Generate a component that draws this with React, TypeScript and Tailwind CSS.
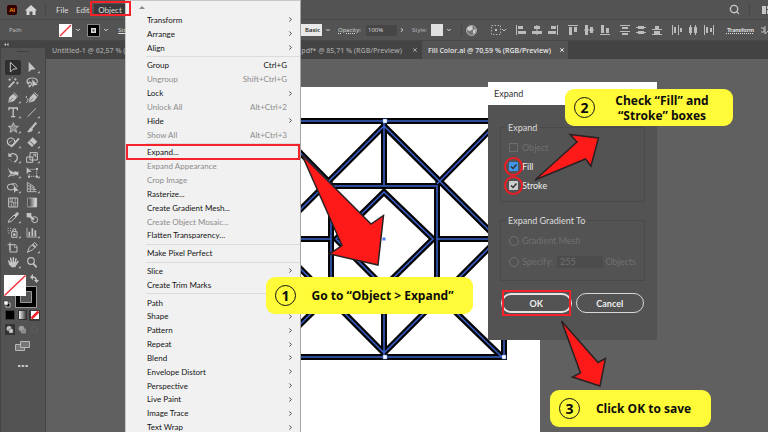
import React from "react";
import { ChevronDown, ChevronRight, Search, X } from "lucide-react";

type MenuItem = { label: string; shortcut?: string; sub?: boolean; off?: boolean; marked?: boolean };

const menuGroups: MenuItem[][] = [
  [
    { label: "Transform", sub: true },
    { label: "Arrange", sub: true },
    { label: "Align", sub: true },
  ],
  [
    { label: "Group", shortcut: "Ctrl+G" },
    { label: "Ungroup", shortcut: "Shift+Ctrl+G", off: true },
    { label: "Lock", sub: true },
    { label: "Unlock All", shortcut: "Alt+Ctrl+2", off: true },
    { label: "Hide", sub: true },
    { label: "Show All", shortcut: "Alt+Ctrl+3", off: true },
  ],
  [
    { label: "Expand...", marked: true },
    { label: "Expand Appearance", off: true },
    { label: "Crop Image", off: true },
    { label: "Rasterize..." },
    { label: "Create Gradient Mesh..." },
    { label: "Create Object Mosaic...", off: true },
    { label: "Flatten Transparency..." },
  ],
  [{ label: "Make Pixel Perfect" }],
  [{ label: "Slice", sub: true }, { label: "Create Trim Marks" }],
  [
    { label: "Path", sub: true },
    { label: "Shape", sub: true },
    { label: "Pattern", sub: true },
    { label: "Repeat", sub: true },
    { label: "Blend", sub: true },
    { label: "Envelope Distort", sub: true },
    { label: "Perspective", sub: true },
    { label: "Live Paint", sub: true },
    { label: "Image Trace", sub: true },
    { label: "Text Wrap", sub: true },
  ],
];

function ObjectMenu() {
  return (
    <nav
      aria-label="Object"
      className="absolute left-[125px] top-0 flex h-[434px] w-[176px] flex-col border-l border-r border-t border-[#c8c8c8] border-r-[#a5a5a5] bg-[#f1f1f1] font-['Lato','Open_Sans',sans-serif] text-[8px] leading-none text-[#141414]"
    >
      <div className="flex h-3 items-center pl-[13px]">
        <svg className="h-[3px] w-[6px]" viewBox="0 0 6 3">
          <path d="M0 3L3 0L6 3Z" fill="#8a8a8a" />
        </svg>
      </div>
      {menuGroups.map((group, g) => (
        <React.Fragment key={g}>
          {g > 0 && (
            <div className="flex h-1 items-center pl-5">
              <div className="h-px w-full bg-[#dcdcdc]" />
            </div>
          )}
          {group.map((item) => (
            <button
              key={item.label}
              disabled={item.off}
              className="relative flex min-h-0 flex-1 items-center justify-between pl-[21px] pr-[13px] text-left disabled:text-[#8c8c8c]"
            >
              <span>{item.label}</span>
              {item.shortcut && <span>{item.shortcut}</span>}
              {item.sub && <ChevronRight className="-mr-[7px] size-[7px] text-[#333333]" strokeWidth={3} />}
              {item.marked && <span className="absolute inset-x-0 -inset-y-px border-2 border-[#f5222a]" />}
            </button>
          ))}
        </React.Fragment>
      ))}
    </nav>
  );
}

const more = <path d="M47 33V40H40Z" fill="#c4c4c4" stroke="none" />;

/* Each tool glyph is drawn on a 48 x 45 cell. */
const tools: { name: string; art: React.ReactNode }[] = [
  { name: "Selection", art: <path d="M16 7V36L24 28L36 26Z" strokeWidth="3" /> },
  { name: "Direct selection", art: <><path d="M14 5V37L22 29L35 28Z" fill="#c4c4c4" stroke="none" />{more}</> },
  { name: "Magic wand", art: <><path d="M11 37L28 20" strokeWidth="5" /><path d="M31 9V17M27 13H35M14 10V18M10 14H18M37 20V28M33 24H41M22 7V10" strokeWidth="2.5" /></> },
  { name: "Lasso", art: <><path d="M15 28C6 24 7 9 23 9C38 8 44 18 38 25M15 28C11 20 22 18 22 27C22 33 16 36 14 32M16 30L17 37" strokeWidth="3.5" /><path d="M25 13V37L31 31L41 30Z" fill="#c4c4c4" stroke="none" /></> },
  { name: "Pen", art: <><path d="M9 38L13 22L25 11L37 22L26 34Z" fill="#c4c4c4" stroke="none" /><path d="M26 7L39 20" strokeWidth="3" /><path d="M9 38L23 24" stroke="#535353" strokeWidth="2" />{more}</> },
  { name: "Curvature", art: <><path d="M14 38L17 23L29 10L40 21L30 34Z" fill="#c4c4c4" stroke="none" /><path d="M31 7L43 18M7 18C5 28 16 24 10 35C9 38 7 38 6 36" strokeWidth="3" /><path d="M15 37L28 24" stroke="#535353" strokeWidth="2" /></> },
  { name: "Type", art: <><path d="M12 16V9H37V16M24.500 9V35M18 35H31" strokeWidth="4" />{more}</> },
  { name: "Line", art: <><path d="M11 35L36 10" strokeWidth="3" />{more}</> },
  { name: "Star", art: <><path d="M25 8L29 18L40 19L32 26L35 37L25 31L15 37L18 26L10 19L21 18Z" fill="#858585" strokeWidth="2.5" />{more}</> },
  { name: "Brush", art: <><path d="M37 8L23 24" strokeWidth="6" /><path d="M21 22L27 28C25 36 17 38 9 36C15 33 14 26 21 22Z" fill="#c4c4c4" stroke="none" />{more}</> },
  { name: "Shaper", art: <><circle cx="18" cy="20" r="11" strokeWidth="3.5" /><path d="M42 10L23 31L17 35" strokeWidth="6" /><path d="M11 24L23 15" strokeWidth="2" />{more}</> },
  { name: "Eraser", art: <><path d="M26 7L40 20L24 36L10 23Z" fill="#c4c4c4" stroke="none" /><path d="M17 18L30 30" stroke="#535353" strokeWidth="2.500" />{more}</> },
  { name: "Rotate", art: <><path d="M13 16C23 5 38 13 37 25C36 31 32 35 27 36" strokeWidth="3.5" /><path d="M10 8V20H22Z" fill="#c4c4c4" stroke="none" /><path d="M13 28L22 36" strokeWidth="2.5" strokeDasharray="3 3" />{more}</> },
  { name: "Scale", art: <><path d="M18 8H40V30H18ZM8 21H26V37H8Z" strokeWidth="3" /><path d="M23 24L34 13M27 13H35V21" strokeWidth="2.5" />{more}</> },
  { name: "Width", art: <><path d="M10 10C15 22 23 15 24 24C32 14 35 25 40 20L39 32C32 24 28 37 20 31L9 36L16 27Z" fill="#c4c4c4" strokeWidth="1" /><path d="M12 26L32 31" stroke="#535353" strokeWidth="2" />{more}</> },
  { name: "Free transform", art: <><path d="M19 13H38V34H15V25" strokeWidth="2.5" strokeDasharray="4 2" /><path d="M8 7V27L14 21L23 20Z" fill="#c4c4c4" stroke="none" /><path d="M36 9H42V15H36ZM36 32H42V38H36ZM12 32H18V38H12Z" fill="#c4c4c4" stroke="none" />{more}</> },
  { name: "Shape builder", art: <><ellipse cx="18" cy="21" rx="11" ry="9" strokeWidth="3" /><path d="M21 12C31 8 38 14 36 22" strokeWidth="3" /><path d="M27 17V39L32 33L41 32Z" fill="#c4c4c4" stroke="none" />{more}</> },
  { name: "Perspective grid", art: <><path d="M10 7V35H38M10 7L30 20V35M10 16L30 24M10 26L37 29M19 13V35" strokeWidth="2.5" />{more}</> },
  { name: "Mesh", art: <><path d="M11 9H38V36H11Z" strokeWidth="3" /><path d="M11 22C20 13 28 31 38 21M24 9C17 18 31 25 24 36M17 9L20 36M31 9L30 36" strokeWidth="2" /></> },
  { name: "Gradient", art: <path d="M11 9H38V36H11Z" fill="url(#toolFade)" strokeWidth="2" /> },
  { name: "Eyedropper", art: <><path d="M10 37L13 29L27 15L33 21L19 34Z" strokeWidth="3" /><path d="M28 16L34 9C40 5 43 12 38 15L33 21Z" fill="#c4c4c4" strokeWidth="2" />{more}</> },
  { name: "Blend", art: <><path d="M8 9H22V22H8Z" fill="#c4c4c4" stroke="none" /><circle cx="32" cy="29" r="9" strokeWidth="3" /><path d="M15 16L30 29" strokeWidth="7" /></> },
  { name: "Symbol sprayer", art: <><path d="M20 20H36V37H20ZM24 20V12H32V20" strokeWidth="3" /><circle cx="28" cy="29" r="4" fill="#c4c4c4" stroke="none" /><path d="M8 10H11M15 10H18M8 17H11M15 17H18M10 24H13" strokeWidth="3" />{more}</> },
  { name: "Graph", art: <><path d="M9 8V36H40" strokeWidth="2.5" /><path d="M16 34V20M25 34V10M34 34V16" strokeWidth="5" />{more}</> },
  { name: "Artboard", art: <><path d="M15 7V31M8 14H31L36 20V36H15V14" strokeWidth="3" /><path d="M28 14V22H36" strokeWidth="2" /></> },
  { name: "Slice", art: <><path d="M10 37L16 22L32 8L40 15L26 29Z" strokeWidth="3" /><path d="M26 14L34 22" strokeWidth="5" />{more}</> },
  { name: "Hand", art: <><path d="M14 24L11 18M19 21L17 10M25 20V8M31 22L33 11M34 27L39 19" strokeWidth="4.500" strokeLinecap="round" /><path d="M12 22L34 20L36 26L31 37H20L11 28Z" fill="#c4c4c4" stroke="none" />{more}</> },
  { name: "Zoom", art: <><circle cx="21" cy="18" r="10" strokeWidth="3.5" /><path d="M28 26L38 37" strokeWidth="5" /></> },
];

function ToolPanel() {
  return (
    <aside className="flex w-[46px] shrink-0 flex-col border-r border-[#444444] bg-[#535353]">
      <div className="flex h-[7px] items-center bg-[#444444] pl-1">
        <svg className="h-[3px] w-[5px]" viewBox="0 0 10 6">
          <path d="M4 0L0 3L4 6ZM9 0L5 3L9 6Z" fill="#c8c8c8" />
        </svg>
      </div>
      <div className="flex h-3 justify-center border-l border-[#444444] pt-[3px]">
        <div className="h-px w-3 bg-[#404040]" />
      </div>
      <div className="flex flex-1 flex-col border-l border-[#444444]">
        <div className="grid grid-cols-[16px_16px] gap-x-[3px] pl-1">
          {tools.map((tool, i) => (
            <button key={tool.name} aria-label={tool.name} className={i === 0 ? "h-[15px] rounded-[2px] bg-[#2f2f2f]" : "h-[15px]"}>
              <svg className="h-[15px] w-4" viewBox="0 0 48 45" fill="none" stroke="#c4c4c4">
                {i === 0 && (
                  <defs>
                    <linearGradient id="toolFade">
                      <stop offset="0" stopColor="#303030" />
                      <stop offset="1" stopColor="#f0f0f0" />
                    </linearGradient>
                  </defs>
                )}
                {tool.art}
              </svg>
            </button>
          ))}
        </div>
        <svg className="mt-1 h-[36px] w-[40px]" viewBox="0 0 40 36" fill="none">
          <path d="M14.500 12.500H35.500V33.500H14.500Z" fill="#000000" stroke="#9a9a9a" />
          <path d="M19.500 17.500H30.500V28.500H19.500Z" fill="#535353" stroke="#9a9a9a" />
          <path d="M3 1H25V22H3Z" fill="#ffffff" />
          <path d="M3.500 21.500L24.500 1.500" stroke="#f2323a" strokeWidth="1.5" />
          <path d="M31 3C34 3 35.500 4 35.500 7" stroke="#c4c4c4" strokeWidth="1.5" />
          <path d="M32 0V6L29 3ZM33 6H38L35.500 9Z" fill="#c4c4c4" />
          <path d="M5 29H9V33H5Z" fill="#000000" stroke="#c4c4c4" />
          <path d="M3 27H7V31H3Z" fill="#ffffff" stroke="#222222" strokeWidth=".5" />
        </svg>
        <svg className="h-[66px] w-[42px]" viewBox="0 0 42 66" fill="none">
          <defs>
            <linearGradient id="swatchFade">
              <stop offset="0" stopColor="#ffffff" />
              <stop offset="1" stopColor="#303030" />
            </linearGradient>
          </defs>
          <path d="M4.500 0.500H13.500V9.500H4.500Z" fill="#000000" stroke="#3a3a3a" />
          <path d="M17.500 0.500H25.500V9.500H17.500Z" fill="url(#swatchFade)" stroke="#333333" />
          <path d="M28 -1H39V11H28Z" fill="#383838" />
          <path d="M30 1H38V9H30Z" fill="#ffffff" />
          <path d="M30.500 8.500L37.500 1.500" stroke="#f5222a" strokeWidth="2.5" />
          <path d="M4 14H14V25H4Z" fill="#343434" />
          <circle cx="8" cy="18.500" r="2.500" fill="#bdbdbd" />
          <path d="M8 19H12V23H8Z" fill="#d0d0d0" stroke="#555555" strokeWidth=".5" />
          <circle cx="20.500" cy="18.500" r="2.800" fill="#9c9c9c" />
          <path d="M20.500 19H24.500V23H20.500Z" fill="#888888" stroke="#b0b0b0" strokeWidth=".5" />
          <circle cx="33.500" cy="19.500" r="3" stroke="#5e5e5e" />
          <path d="M14.500 34.500H23.500V40.500H14.500Z" fill="#777777" stroke="#b8b8b8" />
          <path d="M19.500 31.500H28.500V37.500H19.500Z" fill="#777777" stroke="#b8b8b8" />
          <path d="M17 56H19.500M20.700 56H23.200M24.400 56H26.900" stroke="#c4c4c4" strokeWidth="2" />
        </svg>
      </div>
    </aside>
  );
}

const alignGlyphs = [
  "M0 0H1V10H0ZM2 1H7V4H2ZM2 6H10V9H2Z",
  "M4.500 0H5.500V10H4.500ZM2 1H8V4H2ZM0 6H10V9H0Z",
  "M9 0H10V10H9ZM3 1H8V4H3ZM0 6H8V9H0Z",
  "M0 0H10V1H0ZM1 2H4V10H1ZM6 2H9V7H6Z",
  "M0 4.500H10V5.500H0ZM1 0H4V10H1ZM6 2H9V8H6Z",
  "M0 9H10V10H0ZM1 0H4V8H1ZM6 3H9V8H6Z",
  "M0 0H10V1H0ZM2 2H8V4H2ZM0 6H10V7H0ZM2 8H8V10H2Z",
  "M0 2H10V3H0ZM2 1H8V4H2ZM0 7H10V8H0ZM2 6H8V9H2Z",
  "M0 4H10V5H0ZM3 1H7V4H3ZM0 9H10V10H0ZM2 6H8V9H2Z",
  "M0 0H1V10H0ZM2 2H4V8H2ZM6 0H7V10H6ZM8 3H10V7H8Z",
  "M2 0H3V10H2ZM1 2H4V8H1ZM7 0H8V10H7ZM6 2H9V8H6Z",
  "M0 0H1V10H0ZM2 2H4V8H2ZM9 0H10V10H9ZM6 3H8V7H6Z",
];

function MenuBar() {
  return (
    <header className="flex h-[19px] items-center bg-[#535353] pl-[7px] font-['Lato','Open_Sans',sans-serif] text-[8px] leading-none text-[#dedede]">
      <div className="flex size-[10px] items-center justify-center rounded-[2px] bg-[#330000] text-[6px] font-bold text-[#ff9a00]">Ai</div>
      <svg className="ml-[8px] h-[10px] w-[12px]" viewBox="0 0 12 10">
        <path d="M6 0L12 5.500H10.500V10H7.500V6.500H4.500V10H1.500V5.500H0Z" fill="#d6d6d6" />
      </svg>
      <div className="ml-2 h-3 w-px bg-[#484848]" />
      <button className="ml-[10px] w-3 text-left">File</button>
      <button className="ml-2 w-[14px] text-left">Edit</button>
      <button className="ml-1 h-[11px] w-8 bg-[#3a3a3a]">Object</button>
      <div className="ml-auto flex items-center">
        <Search className="size-[11px] text-[#c8c8c8]" strokeWidth={3} />
        <div className="ml-[9px] h-3 w-px bg-[#484848]" />
        <svg className="ml-3 h-[8px] w-[6px]" viewBox="0 0 6 8">
          <path d="M0 0H4V8H0ZM5 0H6V3H5ZM5 4H6V8H5Z" fill="#c8c8c8" />
        </svg>
      </div>
    </header>
  );
}

function ControlBar() {
  return (
    <div className="flex h-[22px] items-center border-y border-[#474747] bg-[#535353] text-[6px] leading-none text-[#dedede]">
      <div className="flex w-[301px] shrink-0 items-center pl-[9px]">
        <span className="w-[50px] text-[#c0c0c0]">Path</span>
        <svg className="size-[13px]" viewBox="0 0 13 13">
          <path d="M0 0H13V13H0Z" fill="#ffffff" />
          <path d="M1 12L12 1" stroke="#f2323a" strokeWidth="1.5" />
        </svg>
        <ChevronDown className="ml-[3px] size-[6px]" strokeWidth={4} />
        <svg className="ml-[6px] size-[13px]" viewBox="0 0 13 13">
          <path d="M.5 .5H12.500V12.500H.5Z" fill="#000000" stroke="#8a8a8a" />
          <path d="M4 4H9V9H4Z" fill="#dddddd" />
          <path d="M5.500 5.500H7.500V7.500H5.500Z" fill="#444444" />
        </svg>
        <ChevronDown className="ml-[3px] size-[6px]" strokeWidth={4} />
        <span className="ml-[9px] underline">Stroke:</span>
      </div>
      <select aria-label="Brush" className="h-3 w-[21px] appearance-none bg-[#e8e8e8] pl-1 text-[6px] font-semibold leading-none text-[#222222]">
        <option>Basic</option>
      </select>
      <ChevronDown className="ml-[3px] size-[6px]" strokeWidth={4} />
      <label htmlFor="opacity" className="ml-[7px] w-7 underline decoration-dotted">Opacity:</label>
      <input id="opacity" defaultValue="100%" className="h-[11px] w-[31px] bg-[#464646] pl-[2px] text-[6px]" />
      <ChevronRight className="ml-[2px] size-[6px]" strokeWidth={4} />
      <span className="ml-[7px] w-[19px] text-[#b8b8b8]">Style:</span>
      <div className="h-3 w-3 shrink-0 bg-[#e0e0e0]" />
      <ChevronDown className="ml-[3px] size-[6px]" strokeWidth={4} />
      <div className="ml-[9px] h-3 w-px bg-[#484848]" />
      <svg className="ml-1 size-[11px] shrink-0" viewBox="0 0 11 11">
        <circle cx="5.500" cy="5.500" r="5" fill="#777777" stroke="#b0b0b0" />
        <path d="M2 2L6 1L7 4L4 6L1 5ZM7 5L10 4L9 8L7 9Z" fill="#d0d0d0" />
      </svg>
      <svg className="ml-[14px] h-[10px] w-[16px] shrink-0" viewBox="0 0 16 10">
        <path d="M.5 .5H9.500V9.500H.5Z" fill="none" stroke="#b0b0b0" strokeDasharray="1.500 1.500" />
        <path d="M4 4H6V6H4Z" fill="#c0c0c0" />
        <path d="M11 4L13 6L15 4" fill="none" stroke="#c0c0c0" />
      </svg>
      <div className="ml-[9px] flex shrink-0 items-center gap-[6px]">
        {alignGlyphs.map((d, i) => (
          <button key={d} aria-label={"Align " + (i + 1)} className={i > 0 && i % 3 === 0 ? "ml-1" : ""}>
            <svg className="size-[10px]" viewBox="0 0 10 10">
              <path d={d} fill="#bcbcbc" />
            </svg>
          </button>
        ))}
      </div>
      <button className="ml-auto font-['Lato','Open_Sans',sans-serif] font-bold text-[#e6e6e6] underline decoration-dotted">Transform</button>
      <svg className="ml-[7px] h-[8px] w-[7px] shrink-0" viewBox="0 0 7 8">
        <path d="M0 2H3V6H0M4 0V8L7 5" fill="none" stroke="#c0c0c0" />
      </svg>
    </div>
  );
}

function Tabs() {
  return (
    <div className="flex h-[18px] items-stretch bg-[#434343] text-[7px] font-semibold leading-none text-[#a2a2a2]">
      <div className="flex w-[150px] shrink-0 items-center pl-[6px]">Untitled-1 @ 62,57 % (</div>
      <div className="flex w-[226px] shrink-0 items-center justify-end gap-[10px] pr-1">
        <span>.pdf* @ 85,71 % (RGB/Preview)</span>
        <X className="size-[6px]" strokeWidth={4} />
      </div>
      <div className="flex w-[146px] shrink-0 items-center justify-between bg-[#535353] pl-[6px] pr-[3px] text-[#e6e6e6]">
        <span>Fill Color.ai @ 70,59 % (RGB/Preview)</span>
        <X className="size-[6px]" strokeWidth={4} />
      </div>
    </div>
  );
}

const starPath =
  "M265 121H504V357H265Z M384 126L498 239L384 353L271 239Z M331 186H437V292H331Z M384 192L433 239L384 287L336 239Z M384 121V186M384 292V357M265 239H331M437 239H504M269 121L331 184M499 121L437 184M331 294L267 357M437 294L502 357";

function Artboard() {
  return (
    <svg className="absolute left-[184px] top-[28px] h-[345px] w-[310px]" viewBox="230 87 310 345" fill="none">
      <path d="M230 87H540V432H230Z" fill="#ffffff" />
      <path d={starPath} stroke="#050505" strokeWidth="6" />
      <path d={starPath} stroke="#3a60cc" strokeWidth="1.5" />
      <path d="M383 119H387V123H383ZM383 355H387V359H383ZM502 355H506V359H502Z" fill="#ffffff" stroke="#4f7df0" strokeWidth=".5" />
      <path d="M382.500 237.500H385.500V240.500H382.500Z" fill="#4f7df0" />
    </svg>
  );
}

function CheckRow({ label, tone, off }: { label: string; tone?: string; off?: boolean }) {
  return (
    <label className={off ? "flex h-[19px] items-center gap-1 text-[#707070]" : "flex h-[19px] items-center gap-1 text-[#f0f0f0]"}>
      <span className="relative flex size-[9px]">
        <input
          type="checkbox"
          defaultChecked={!off}
          disabled={off}
          className={off ? "size-[9px] appearance-none border border-[#6c6c6c]" : `size-[9px] appearance-none rounded-[1px] ${tone}`}
        />
        {!off && (
          <>
            <svg className="absolute inset-0 size-[9px]" viewBox="0 0 9 9" fill="none">
              <path d="M2 4.500L4 6.500L7.500 2.500" stroke="#333333" strokeWidth="1.500" />
            </svg>
            <span className="absolute -inset-[5px] rounded-full border-2 border-[#ee1c24]" />
          </>
        )}
      </span>
      {label}
    </label>
  );
}

function ExpandDialog() {
  return (
    <section
      aria-label="Expand"
      className="absolute left-[488px] top-[82px] h-[258px] w-[169px] bg-[#535353] font-['Lato','Open_Sans',sans-serif] text-[9px] leading-none text-[#dcdcdc]"
    >
      <h2 className="flex h-[23px] items-center bg-white pl-[6px] text-[#333333]">Expand</h2>
      <div className="flex flex-col px-3 pt-[18px]">
        <fieldset className="h-[79px] min-w-0 border border-[#4a4a4a] px-2">
          <legend className="-ml-[3px] px-[2px]">Expand</legend>
          <div className="pt-[6px]">
            <CheckRow label="Object" off />
            <CheckRow label="Fill" tone="bg-[#3f97f0]" />
            <CheckRow label="Stroke" tone="bg-[#cccccc]" />
          </div>
        </fieldset>
        <fieldset className="mt-[14px] h-[65px] min-w-0 border border-[#4a4a4a] px-2 text-[#707070]">
          <legend className="-ml-[3px] px-[2px] text-[#dcdcdc]">Expand Gradient To</legend>
          <label className="mt-[5px] flex h-[21px] items-center gap-[3px]">
            <input type="radio" name="gradient" disabled className="size-[10px] appearance-none rounded-full border border-[#707070]" />
            Gradient Mesh
          </label>
          <div className="flex h-[21px] items-center gap-[3px]">
            <input id="specify" type="radio" name="gradient" disabled className="size-[10px] shrink-0 appearance-none rounded-full border border-[#707070]" />
            <label htmlFor="specify" className="w-8 shrink-0">Specify:</label>
            <input aria-label="Objects" disabled defaultValue="255" className="h-3 w-12 min-w-0 bg-[#4c4c4c] pl-[3px]" />
            <span>Objects</span>
          </div>
        </fieldset>
        <div className="mt-3 flex gap-1 px-px text-[#eeeeee]">
          <button className="relative h-5 flex-1 rounded-full border-2 border-[#e4e4e4] font-bold">
            OK
            <span className="absolute -inset-x-px -inset-y-[5px] border-2 border-[#f5222a]" />
          </button>
          <button className="h-5 flex-1 rounded-full border border-[#d8d8d8] font-bold">Cancel</button>
        </div>
      </div>
    </section>
  );
}

function Callout({ step, place, children }: { step: number; place: string; children: React.ReactNode }) {
  return (
    <div className={`absolute flex h-[37px] items-center rounded-[9px] bg-[#fffb38] pl-[9px] pr-1 text-[12px] font-bold leading-[15px] text-[#0c0c0c] ${place}`}>
      <span className="flex size-[21px] shrink-0 items-center justify-center rounded-full border border-[#111111] text-[14px]">{step}</span>
      <p className="flex-1 text-center">{children}</p>
    </div>
  );
}

export default function App() {
  return (
    <div className="relative flex h-screen flex-col overflow-hidden whitespace-nowrap bg-[#606060] font-['Open_Sans','Noto_Sans',sans-serif]">
      <MenuBar />
      <ControlBar />
      <div className="flex min-h-0 flex-1">
        <ToolPanel />
        <main className="flex min-w-0 flex-1 flex-col">
          <Tabs />
          <div className="relative flex-1 overflow-hidden bg-[#606060]">
            <Artboard />
          </div>
        </main>
      </div>
      <ObjectMenu />
      <div className="absolute left-[90px] top-px h-[15px] w-[41px] border-2 border-[#f5222a]" />
      <ExpandDialog />
      <svg className="pointer-events-none absolute left-0 top-0 h-[432px] w-[768px]" viewBox="0 0 768 432" fill="#ff1a1a" stroke="#2b2022" strokeWidth="1.5">
        <path d="M302 155L371 224L383.500 215.500L378 265L329.500 254L342 245.500Z" />
        <path d="M535 180L577 142L570 134.500L598.500 138L591 166L585.500 159Z" />
        <path d="M561.500 321L598 362.500L605.500 358.500L600 386L572.500 377L580.500 373Z" />
      </svg>
      <Callout step={1} place="left-[266px] top-[277px] w-[207px]">Go to “Object &gt; Expand”</Callout>
      <Callout step={2} place="left-[565px] top-[89px] w-[168px]">Check “Fill” and<br />“Stroke” boxes</Callout>
      <Callout step={3} place="left-[550px] top-[390px] w-[161px]">Click OK to save</Callout>
    </div>
  );
}
